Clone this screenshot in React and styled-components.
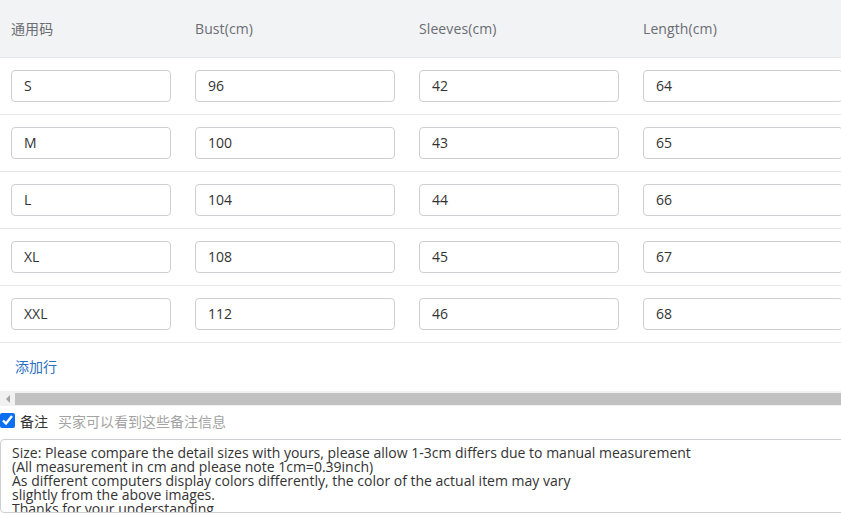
import React from 'react'
import styled, { createGlobalStyle } from 'styled-components'

const GlobalStyle = createGlobalStyle`
  html, body {
    margin: 0;
    padding: 0;
    background: #fff;
    overflow: hidden;
  }
  body {
    font-family: "Open Sans", "Noto Sans CJK SC", sans-serif;
    font-size: 14px;
    color: #333;
  }
`

const Page = styled.div`
  width: 841px;
  overflow: hidden;
`

const TableWrap = styled.div`
  width: 960px;
`

const Row = styled.div`
  display: grid;
  grid-template-columns: 184px 224px 224px 224px;
  align-items: center;
  height: ${p => (p.head ? '57px' : '56px')};
  background: ${p => (p.head ? '#f2f3f5' : '#fff')};
  border-bottom: 1px solid #e6e7ea;
`

const HeadCell = styled.div`
  padding-left: 11px;
  padding-bottom: 1px;
  color: #6a6d72;
  font-size: 14px;
  letter-spacing: 0.1px;
`

const Cell = styled.div`
  padding-left: 11px;
`

const Input = styled.input`
  box-sizing: border-box;
  width: ${p => (p.narrow ? '160px' : '200px')};
  height: 32px;
  border: 1px solid #cdcfd3;
  border-radius: 4px;
  padding: 0 12px 2px;
  font-family: "Open Sans", sans-serif;
  font-size: 14px;
  color: #333;
  outline: none;
`

const AddRow = styled.div`
  height: 48px;
  display: flex;
  align-items: center;
  padding-left: 15px;
  padding-bottom: 2px;
  box-sizing: border-box;
  color: #2a6fc4;
  font-size: 14px;
`

const ScrollBar = styled.div`
  display: flex;
  align-items: center;
  height: 15px;
  background: #f1f1f1;
`

const ScrollArrow = styled.div`
  width: 15px;
  display: flex;
  justify-content: center;
  &::before {
    content: '';
    border-top: 4px solid transparent;
    border-bottom: 4px solid transparent;
    border-right: 4px solid #a3a3a3;
  }
`

const ScrollThumb = styled.div`
  flex: 1;
  height: 12px;
  background: #c1c1c1;
`

const NoteBar = styled.label`
  display: flex;
  align-items: center;
  height: 29px;
  gap: 5px;
`

const Check = styled.input`
  margin: 0;
  width: 15px;
  height: 15px;
  accent-color: #0b6ff2;
`

const NoteLabel = styled.span`
  color: #333;
  font-size: 14px;
`

const NoteHint = styled.span`
  margin-left: 5px;
  color: #a3a3a3;
  font-size: 14px;
`

const Note = styled.textarea`
  display: block;
  box-sizing: border-box;
  margin-top: 4px;
  width: 900px;
  height: 74px;
  padding: 6px 11px;
  border: 1px solid #cdcfd3;
  border-radius: 4px;
  font-family: "Open Sans", sans-serif;
  font-size: 14px;
  line-height: 14px;
  color: #333;
  resize: none;
  overflow: hidden;
  outline: none;
`

const sizes = [
  ['S', '96', '42', '64'],
  ['M', '100', '43', '65'],
  ['L', '104', '44', '66'],
  ['XL', '108', '45', '67'],
  ['XXL', '112', '46', '68'],
]

const noteText = `Size: Please compare the detail sizes with yours, please allow 1-3cm differs due to manual measurement
(All measurement in cm and please note 1cm=0.39inch)
As different computers display colors differently, the color of the actual item may vary
slightly from the above images.
Thanks for your understanding`

const App = () => {
  return (
    <Page>
      <GlobalStyle />
      <TableWrap>
        <Row head>
          <HeadCell>通用码</HeadCell>
          <HeadCell>Bust(cm)</HeadCell>
          <HeadCell>Sleeves(cm)</HeadCell>
          <HeadCell>Length(cm)</HeadCell>
        </Row>
        {sizes.map(row => (
          <Row key={row[0]}>
            {row.map((v, i) => (
              <Cell key={i}>
                <Input narrow={i === 0} defaultValue={v} />
              </Cell>
            ))}
          </Row>
        ))}
        <AddRow>添加行</AddRow>
      </TableWrap>
      <ScrollBar>
        <ScrollArrow />
        <ScrollThumb />
      </ScrollBar>
      <NoteBar>
        <Check type="checkbox" defaultChecked />
        <NoteLabel>备注</NoteLabel>
        <NoteHint>买家可以看到这些备注信息</NoteHint>
      </NoteBar>
      <Note defaultValue={noteText} />
    </Page>
  )
}

export default App
